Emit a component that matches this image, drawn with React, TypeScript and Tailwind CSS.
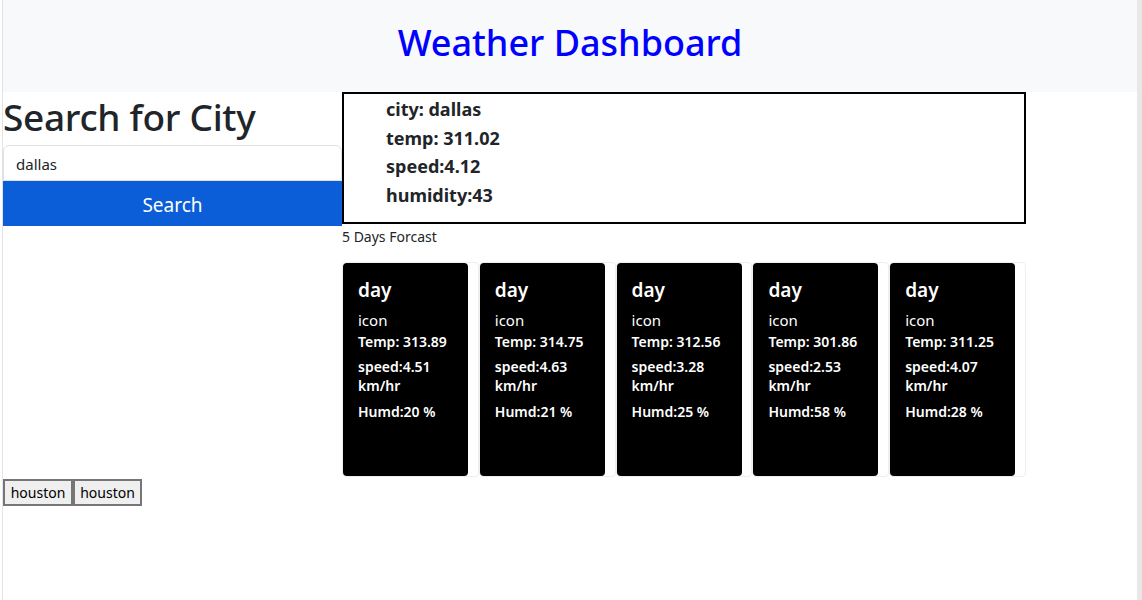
import React from "react";

const days = [
  { temp: "313.89", speed: "4.51", humd: "20" },
  { temp: "314.75", speed: "4.63", humd: "21" },
  { temp: "312.56", speed: "3.28", humd: "25" },
  { temp: "301.86", speed: "2.53", humd: "58" },
  { temp: "311.25", speed: "4.07", humd: "28" },
];

export default function App() {
  return (
    <div
      className="w-full h-[600px] bg-white flex text-[#212529] overflow-hidden"
      style={{ fontFamily: '"Segoe UI", "Noto Sans", sans-serif' }}
    >
      <div className="w-[2px] shrink-0 bg-white" />
      <div className="w-[1px] shrink-0 bg-[#e3e3e3]" />
      <div className="flex-1 min-w-0 flex flex-col">
        <header className="h-[92px] bg-[#f8f9fa] flex items-center justify-center pb-[6px]">
          <h1 className="text-[36px] font-medium text-[#0000ff] leading-none">
            Weather Dashboard
          </h1>
        </header>
        <div className="flex">
          <div className="w-[339px] shrink-0 flex flex-col">
            <h2 className="text-[37px] font-medium leading-[1.2] mt-[3px] mb-[6px] tracking-[-0.3px]">
              Search for City
            </h2>
            <div className="h-[36px] border border-[#dee2e6] rounded-tl-[6px] rounded-tr-[6px] flex items-center px-3 text-[15px] pt-[2px]">
              dallas
            </div>
            <button className="h-[45px] bg-[#0b5ed7] text-white text-[19px] flex items-center justify-center pt-[2px]">
              Search
            </button>
          </div>
          <div className="w-[684px] shrink-0 flex flex-col">
            <div className="h-[132px] border-2 border-black pl-[42px] pt-[1px]">
              <ul className="font-bold text-[18px] leading-[28.5px]">
                <li>city: dallas</li>
                <li>temp: 311.02</li>
                <li>speed:4.12</li>
                <li>humidity:43</li>
              </ul>
            </div>
            <div className="text-[14px] mt-[3px] leading-[20px]">5 Days Forcast</div>
            <div className="mt-[15px] flex">
              {days.map((d, i) => (
                <div
                  key={i}
                  className="w-[137px] h-[215px] border border-[#eeeeee] rounded-[4px] flex"
                >
                  <div className="w-[125px] h-full bg-black rounded-[4px] text-white px-[15px] pt-[15px]">
                    <div className="text-[19px] font-semibold leading-[24px]">day</div>
                    <div className="text-[15px] leading-[20px] mt-[8px]">icon</div>
                    <div className="text-[14px] font-semibold leading-[19px] mt-[2px]">
                      Temp: {d.temp}
                    </div>
                    <div className="text-[14px] font-semibold leading-[19px] mt-[6px]">
                      speed:{d.speed}
                      <br />
                      km/hr
                    </div>
                    <div className="text-[14px] font-semibold leading-[19px] mt-[7px]">
                      Humd:{d.humd} %
                    </div>
                  </div>
                </div>
              ))}
            </div>
          </div>
        </div>
        <div className="flex mt-[2px]">
          <button className="w-[70px] h-[27px] bg-[#efefef] border-2 border-[#767676] text-[14px] leading-none text-black flex items-center justify-center">
            houston
          </button>
          <button className="w-[69px] h-[27px] bg-[#efefef] border-2 border-[#767676] text-[14px] leading-none text-black flex items-center justify-center">
            houston
          </button>
        </div>
      </div>
      <div className="w-[5px] shrink-0 bg-[#e8e8e8]" />
    </div>
  );
}
